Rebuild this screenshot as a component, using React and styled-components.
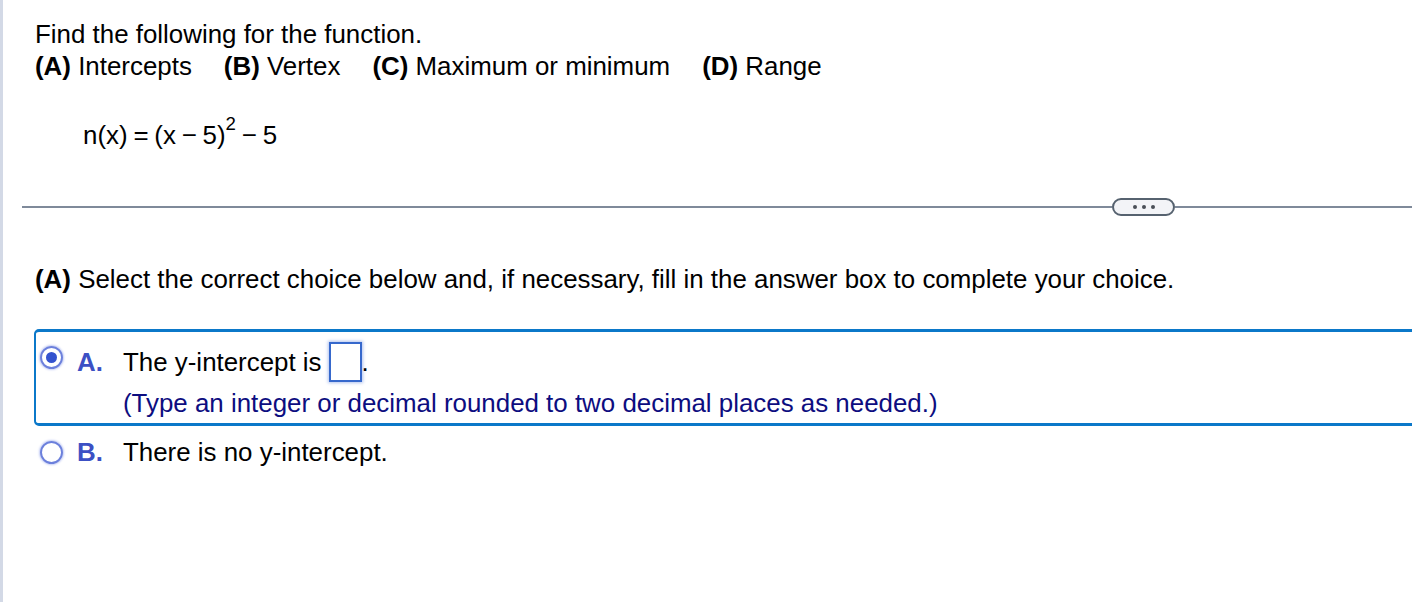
import React from "react";
import styled, { createGlobalStyle } from "styled-components";

const Global = createGlobalStyle`
  html, body { margin: 0; padding: 0; background: #fff; }
  body { font-family: "Liberation Sans", Arial, Helvetica, sans-serif; color: #000; }
  * { box-sizing: border-box; }
`;

const Page = styled.div`
  min-height: 602px;
  border-left: 3px solid #d3d9e6;
  overflow: hidden;
  font-size: 25.9px;
`;

const Question = styled.div`
  padding: 18px 0 0 32px;
`;

const Line = styled.div`
  line-height: 32px;
  white-space: nowrap;
`;

const Part = styled.span`
  margin-right: ${(p) => p.$gap || 0}px;
`;

const B = styled.b`
  font-weight: 700;
`;

const Formula = styled.div`
  margin: 37px 0 0 80px;
  line-height: 32px;
  white-space: nowrap;
  word-spacing: -1.4px;
`;

const Sup = styled.sup`
  font-size: 0.72em;
  vertical-align: 0.75em;
  line-height: 0;
`;

const Divider = styled.div`
  display: flex;
  align-items: center;
  margin: 47px 0 0 19px;
  height: 17px;
`;

const Rule = styled.div`
  height: 2px;
  background: #7f8a9a;
  flex: ${(p) => (p.$fixed ? `0 0 ${p.$fixed}px` : "1 1 auto")};
`;

const Pill = styled.div`
  flex: 0 0 63px;
  height: 18px;
  border: 2px solid #56626f;
  border-radius: 9px;
  background: #f3f4f7;
  display: flex;
  align-items: center;
  justify-content: center;
  gap: 5px;
`;

const Dot = styled.span`
  width: 4px;
  height: 4px;
  border-radius: 50%;
  background: #4a4f57;
`;

const Prompt = styled.div`
  margin: 48px 0 0 32px;
  line-height: 32px;
  white-space: nowrap;
`;

const Choices = styled.div`
  margin: 34px 0 0 31px;
`;

const ChoiceBox = styled.div`
  display: grid;
  grid-template-columns: 37px 46px 1fr;
  width: calc(100% + 40px);
  padding: 0 0 6px 4px;
  border-style: solid;
  border-width: ${(p) => (p.$selected ? "3px 2px 3px 2px" : "0 2px")};
  border-color: ${(p) => (p.$selected ? "#0b78c9" : "transparent")};
  border-radius: 5px 0 0 5px;
  margin-top: ${(p) => p.$mt || 0}px;
`;

const Radio = styled.span`
  width: 23px;
  height: 23px;
  margin-top: ${(p) => p.$mt}px;
  border-radius: 50%;
  border: 2px solid #6c80dc;
  box-shadow: 0 0 2px 1px rgba(120, 140, 230, 0.45);
  display: flex;
  align-items: center;
  justify-content: center;
  &::after {
    content: "";
    width: 11px;
    height: 11px;
    border-radius: 50%;
    background: ${(p) => (p.$checked ? "#3453cf" : "transparent")};
  }
`;

const Letter = styled.span`
  font-weight: 700;
  color: #3c50c4;
  line-height: 32px;
  margin-top: ${(p) => p.$mt}px;
`;

const Content = styled.div`
  display: flex;
  flex-direction: column;
`;

const AnswerLine = styled.div`
  display: flex;
  align-items: center;
  height: 40px;
  margin-top: 10px;
  white-space: nowrap;
`;

const InputBox = styled.span`
  width: 33px;
  height: 40px;
  margin-left: 7px;
  border: 2px solid #3668cc;
  box-shadow: 0 0 3px 1px rgba(80, 120, 220, 0.45);
  background: #fff;
`;

const Hint = styled.div`
  color: #0d0d80;
  line-height: 28px;
  margin-top: 7px;
  white-space: nowrap;
`;

const PlainText = styled.span`
  line-height: 32px;
  white-space: nowrap;
`;

export default function App() {
  return (
    <>
      <Global />
      <Page>
        <Question>
          <Line>Find the following for the function.</Line>
          <Line>
            <Part $gap={32}>
              <B>(A)</B> Intercepts
            </Part>
            <Part $gap={32}>
              <B>(B)</B> Vertex
            </Part>
            <Part $gap={32}>
              <B>(C)</B> Maximum or minimum
            </Part>
            <Part>
              <B>(D)</B> Range
            </Part>
          </Line>
        </Question>
        <Formula>
          n(x) = (x − 5)<Sup>2</Sup> − 5
        </Formula>
        <Divider>
          <Rule $fixed={1090} />
          <Pill>
            <Dot />
            <Dot />
            <Dot />
          </Pill>
          <Rule />
        </Divider>
        <Prompt>
          <B>(A)</B> Select the correct choice below and, if necessary, fill in the answer box to complete your choice.
        </Prompt>
        <Choices>
          <ChoiceBox $selected>
            <Radio $checked $mt={14} />
            <Letter $mt={14}>A.</Letter>
            <Content>
              <AnswerLine>
                The y-intercept is
                <InputBox />
                .
              </AnswerLine>
              <Hint>(Type an integer or decimal rounded to two decimal places as needed.)</Hint>
            </Content>
          </ChoiceBox>
          <ChoiceBox $mt={10}>
            <Radio $mt={5} />
            <Letter $mt={0}>B.</Letter>
            <PlainText>There is no y-intercept.</PlainText>
          </ChoiceBox>
        </Choices>
      </Page>
    </>
  );
}
